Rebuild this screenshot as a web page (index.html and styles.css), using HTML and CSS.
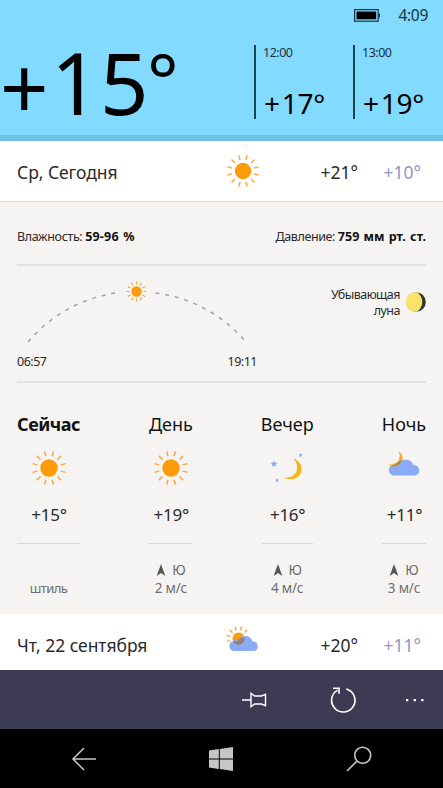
FILE: index.html
```html
<!DOCTYPE html>
<html lang="ru">
<head>
<meta charset="utf-8">
<title>Погода</title>
<link rel="stylesheet" href="styles.css">
</head>
<body>
<svg class="defs" width="0" height="0">
  <defs>
    <symbol id="sun" viewBox="-18 -18 36 36">
      <circle r="8.7" fill="#fd9b0b"/>
      <g stroke="#f9a43c" stroke-width="1.5">
        <path id="rays" d="M3.1 -11.7L4.4 -16.6M-3.1 -11.7L-4.4 -16.6M3.1 11.7L4.4 16.6M-3.1 11.7L-4.4 16.6M11.7 3.1L16.6 4.4M11.7 -3.1L16.6 -4.4M-11.7 3.1L-16.6 4.4M-11.7 -3.1L-16.6 -4.4M8.5 8.5L12.2 12.2M-8.5 8.5L-12.2 12.2M8.5 -8.5L12.2 -12.2M-8.5 -8.5L-12.2 -12.2"/>
      </g>
    </symbol>
    <symbol id="cloud" viewBox="0 0 32 18">
      <path d="M5.5 17.5a5.3 5.3 0 0 1-.8-10.5 5 5 0 0 1 5.600-1.700A8.200 8.200 0 0 1 25 7.300a5.200 5.200 0 0 1 1.800 10.200z" fill="#8babf6"/>
    </symbol>
    <symbol id="wind" viewBox="0 0 10 12">
      <path d="M5 0L9.300 12 5 9 .7 12z" fill="#555"/>
    </symbol>
  </defs>
</svg>
<main class="screen">
  <header class="hero">
    <div class="status">
      <svg class="battery" width="26" height="13" viewBox="0 0 26 13"><rect x=".6" y=".6" width="23.600" height="11.600" fill="none" stroke="#17333e" stroke-width="1.200"/><path d="M2.500 2.500h19.700v7.800H2.500z"/><path d="M24.800 4.500h1.200v4h-1.200z" fill="#17333e"/></svg>
      <span class="clock">4:09</span>
    </div>
    <div class="now">
      <div class="big"><span class="plus">+</span><span class="one">1</span><span class="five">5</span><span class="ring">°</span></div>
      <div class="hour"><span class="time">12:00</span><span class="deg"><span class="sign">+</span>17°</span></div>
      <div class="hour"><span class="time">13:00</span><span class="deg"><span class="sign">+</span>19°</span></div>
    </div>
  </header>
  <section class="day today">
    <span class="name">Ср, Сегодня</span>
    <svg class="icon" width="34" height="34"><use href="#sun"/></svg>
    <span class="high">+21°</span><span class="low">+10°</span>
  </section>
  <section class="details">
    <div class="facts">
      <span class="humid">Влажность: <b>59-96 %</b></span>
      <span class="press">Давление: <b>759 мм рт. ст.</b></span>
    </div>
    <div class="astro">
      <div class="arc">
        <svg width="240" height="82" viewBox="17 266 240 82">
          <path d="M28 342A142 142 0 0 1 118 292.700M155.500 292.900A142 142 0 0 1 246 342" fill="none" stroke="#a5a3a2" stroke-width="1.500" stroke-dasharray="4 5.800"/>
          <circle cx="136.500" cy="291.500" r="5.200" fill="#fd9b0b"/>
          <g transform="translate(136.500 291.500) rotate(15) scale(.58)" stroke="#f9a43c" stroke-width="2"><use href="#rays"/></g>
        </svg>
        <div class="times"><span>06:57</span><span>19:11</span></div>
      </div>
      <div class="moon">
        <span>Убывающая<br>луна</span>
        <svg width="20" height="22" viewBox="0 0 20 22"><circle cx="10" cy="11" r="9.800" fill="#373430"/><path d="M11 1.300A9.800 9.800 0 1 0 11 20.700C18 16 18 6 11 1.300z" fill="#f9e369"/></svg>
      </div>
    </div>
    <div class="parts">
      <div class="part p1">
        <h3>Сейчас</h3><svg class="pic" width="36" height="36"><use href="#sun"/></svg>
        <span class="temp">+15°</span><div class="wind"><span class="dir"></span><span class="calm">штиль</span></div>
      </div>
      <div class="part p2">
        <h3>День</h3><svg class="pic" width="36" height="36"><use href="#sun"/></svg>
        <span class="temp">+19°</span><div class="wind"><span class="dir"><svg width="10" height="12"><use href="#wind"/></svg>Ю</span><span>2 м/с</span></div>
      </div>
      <div class="part p3">
        <h3>Вечер</h3>
        <svg class="pic" width="36" height="36" viewBox="0 0 36 36"><path d="M24.500 8.500C35 12.500 35.500 25 26 28.500 22 30 18 29.500 15.500 27.500 29 28.500 31 16 24.500 8.500z" fill="#f3b71c"/><g fill="#8babf0"><path id="star" d="M5 10.500l1 2.100 2.300.3-1.700 1.600.4 2.300-2-1.100-2 1.100.4-2.300-1.700-1.600 2.300-.3z"/><use href="#star" transform="translate(28.500 -3.700) scale(.63)"/><use href="#star" transform="translate(5 22) scale(.6)"/></g></svg>
        <span class="temp">+16°</span><div class="wind"><span class="dir"><svg width="10" height="12"><use href="#wind"/></svg>Ю</span><span>4 м/с</span></div>
      </div>
      <div class="part p4">
        <h3>Ночь</h3>
        <svg class="pic" width="36" height="36" viewBox="0 0 36 36"><use href="#cloud" x="2" y="8" width="33" height="18"/><path d="M12.500 1c5.500 3.500 5.500 11 0 14.200-3.500 2-7.500 1.500-10-.5C13 14.500 15.500 8 12.500 1z" fill="#f3ad24"/><path d="M15.500 10.200l.9-1.300c-.6 3-2.500 5.200-5.400 6.700-1.800.8-3.800.7-5 .3 1.400-1.500 3.500-1 4.800-1.800 1-2 2.500-3.300 4.700-3.900z" fill="#8a877e"/></svg>
        <span class="temp">+11°</span><div class="wind"><span class="dir"><svg width="10" height="12"><use href="#wind"/></svg>Ю</span><span>3 м/с</span></div>
      </div>
    </div>
  </section>
  <section class="day tomorrow">
    <span class="name">Чт, 22 сентября</span>
    <svg class="icon" width="33" height="28" viewBox="0 0 33 28"><circle cx="12.500" cy="12.500" r="6" fill="#fd9b0b"/><path d="M14.500 4.500l1-4M10.200 4.500l-1-4M6.500 6.700L3.600 3.800M4.300 10.400l-4-1M4.300 14.500l-3.500 1M18.500 6.500l2.800-2.800" stroke="#f9a43c" stroke-width="1.300"/><use href="#cloud" x="3" y="8.500" width="30" height="17"/><path d="M18.500 11.600a6 6 0 0 1-10.100 5.300c-.5-.5-.9-1-1.100-1.500 1.500-.7 2.900-.6 4.200-.1.700-2.500 3.500-4.400 7-3.700z" fill="#94817c"/></svg>
    <span class="high">+20°</span><span class="low">+11°</span>
  </section>
  <footer class="appbar">
    <svg width="26" height="16" viewBox="0 0 26 16" fill="none" stroke="#fff" stroke-width="1.400"><path d="M0 8h9M9 1.300v13.400l3.700-2.700h6.800l4 1.600V2.400l-4 1.600h-6.800z"/></svg>
    <svg width="28" height="28" viewBox="0 0 28 28" fill="none" stroke="#fff" stroke-width="1.600"><path d="M17.200 3A11.700 11.700 0 1 1 8.600 4.100M4 2.300h6v5.500"/></svg>
    <svg width="20" height="4" viewBox="0 0 20 4" fill="#fff"><path d="M1 1h2.300v2.300H1zM8.600 1h2.300v2.300H8.600zM16.200 1h2.300v2.300h-2.300z"/></svg>
  </footer>
  <nav class="navbar">
    <svg width="26" height="24" viewBox="0 0 26 24" fill="none" stroke="#c6c6c6" stroke-width="1.500"><path d="M25 12H2M13 1L2 12l11 11"/></svg>
    <svg width="24" height="24" viewBox="0 0 24 24" fill="#c6c6c6"><path d="M0 3.400L9.800 2v9.500H0zM10.800 1.900L24 0v11.500H10.800zM0 12.500h9.800V22L0 20.600zM10.800 12.500H24V24l-13.200-1.900z"/></svg>
    <svg width="26" height="26" viewBox="0 0 26 26" fill="none" stroke="#c6c6c6" stroke-width="1.600"><circle cx="16.700" cy="9.300" r="8"/><path d="M11 15L1 25"/></svg>
  </nav>
</main>
</body>
</html>
```

FILE: styles.css
```css
* { box-sizing: border-box; }
body { margin: 0; font-family: "Noto Sans", "Open Sans", sans-serif; color: #2b2929; }
.defs { display: block; }
svg { display: block; flex: none; }
.screen { width: 443px; height: 788px; overflow: hidden; display: flex; flex-direction: column; white-space: nowrap; }

.hero { height: 141px; flex: none; background: #82dbff; border-bottom: 6px solid #6cc2e4; }
.status { height: 30px; display: flex; justify-content: flex-end; align-items: center; padding-right: 15px; }
.battery { margin-right: 18px; }
.clock { font-size: 15.5px; line-height: 30px; letter-spacing: -0.3px; color: #17333e; }
.now { height: 105px; display: grid; grid-template-columns: 254px 99px 90px; }
.big { font-size: 85px; line-height: 105px; color: #000; display: flex; }
.plus { width: 51px; padding-top: 5px; }
.one { width: 49px; }
.five { width: 48px; }
.ring { font-size: 74px; margin-top: -3px; margin-left: -1px; }
.hour { display: flex; flex-direction: column; height: 74px; margin-top: 15px; border-left: 2px solid #1c414f; padding-left: 7px; }
.time { font-size: 12.5px; line-height: 16px; letter-spacing: -0.5px; color: #17333e; }
.deg { font-size: 28px; line-height: 30px; letter-spacing: -0.3px; color: #000; margin-top: 27px; padding-left: 1px; }
.sign { letter-spacing: 1.8px; }

.day { flex: none; display: grid; grid-template-columns: 209px 94.5px 63px 59.5px; background: #fff; padding-left: 17px; font-size: 17.5px; letter-spacing: -0.05px; }
.today { height: 61px; border-bottom: 1px solid #dddcdc; line-height: 60px; padding-top: 1px; }
.today .icon { margin-top: 12px; }
.tomorrow { height: 56px; line-height: 62px; }
.tomorrow .icon { margin-top: 12px; }
.low { color: #9795c6; }

.details { height: 412px; flex: none; background: #f6f4f2; padding: 0 17px; }
.facts { height: 64px; padding-top: 4px; line-height: 62px; font-size: 12.5px; display: flex; justify-content: space-between; border-bottom: 2px solid #e5e3e1; }
.facts b { color: #111; letter-spacing: 0; word-spacing: 1px; }
.humid { letter-spacing: -0.35px; }
.humid b { letter-spacing: 0.2px; }
.press { letter-spacing: -0.4px; }
.astro { height: 117px; display: flex; justify-content: space-between; border-bottom: 2px solid #e5e3e1; font-size: 12.5px; }
.arc { width: 240px; }
.times { display: flex; justify-content: space-between; line-height: 28px; letter-spacing: -0.5px; }
.moon { display: flex; gap: 6px; text-align: right; line-height: 16px; padding-top: 21px; letter-spacing: -0.5px; }
.moon svg { margin-top: 4px; }

.parts { display: flex; justify-content: space-between; padding-top: 27px; }
.part { display: flex; flex-direction: column; align-items: center; }
.p1 { width: 63px; } .p2 { width: 43px; } .p3 { width: 51px; } .p4 { width: 44px; }
.part h3 { margin: 0; font-size: 18px; line-height: 28px; font-weight: 400; color: #111; }
.p1 h3 { font-weight: 700; letter-spacing: -0.5px; }
.pic { margin-top: 12px; }
.temp { font-size: 17px; line-height: 28px; margin-top: 15px; letter-spacing: -0.25px; padding-left: 1px; }
.wind { width: 100%; margin-top: 14px; border-top: 1px solid #d8d6d4; padding-top: 17px; display: flex; flex-direction: column; align-items: center; font-size: 13.5px; line-height: 19px; color: #6f6d6c; letter-spacing: -0.2px; }
.calm { font-size: 13px; letter-spacing: -0.6px; }
.dir { height: 18px; display: flex; gap: 6px; align-items: center; }

.appbar { height: 59px; flex: none; background: #3d3b54; display: flex; align-items: center; padding-left: 242px; }
.appbar svg:nth-child(2) { margin-left: 61px; }
.appbar svg:nth-child(3) { margin-left: 48px; }
.navbar { height: 59px; flex: none; background: #000; display: flex; align-items: center; padding-left: 71px; }
.navbar svg:nth-child(2) { margin-left: 112px; }
.navbar svg:nth-child(3) { margin-left: 113px; }
```
